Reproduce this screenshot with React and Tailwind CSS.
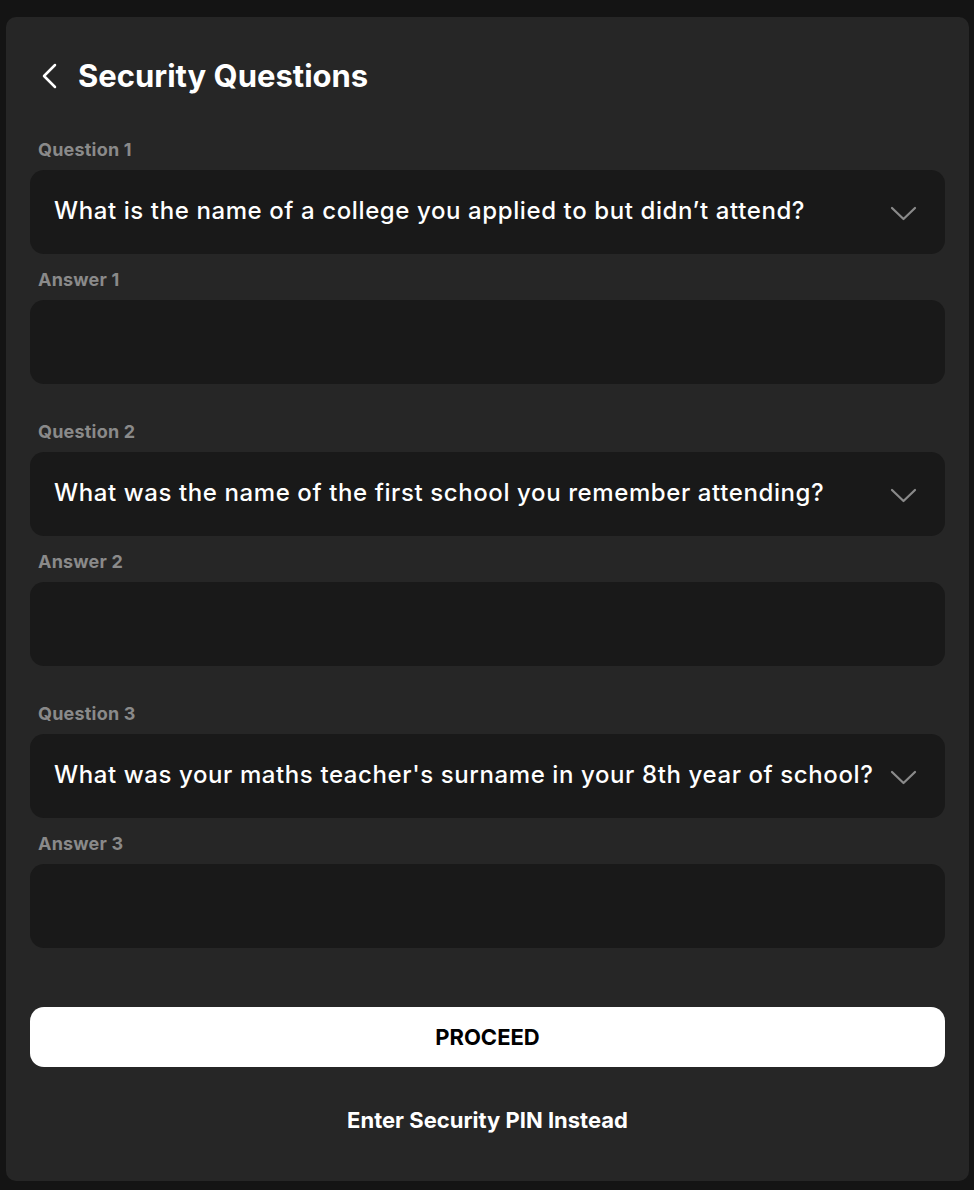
const questions = [
  { id: 1, text: 'What is the name of a college you applied to but didn\u2019t attend?' },
  { id: 2, text: 'What was the name of the first school you remember attending?' },
  { id: 3, text: "What was your maths teacher's surname in your 8th year of school?" },
];

function ChevronDownIcon() {
  return (
    <svg width="27" height="16" viewBox="0 0 27 16" fill="none" className="shrink-0 mt-[3px]">
      <polyline points="2,2 13.5,13 25,2" stroke="#8a8a8a" strokeWidth="2.25" strokeLinecap="round" strokeLinejoin="round" />
    </svg>
  );
}

function QuestionBlock({ q, first }) {
  return (
    <div className={first ? '' : 'mt-[38px]'}>
      <label className="block h-5 leading-5 text-[18px] font-bold text-[#8a8a8a] pl-2 mb-[10px] tracking-[0.2px]">
        Question {q.id}
      </label>
      <button
        type="button"
        className="w-full h-[84px] bg-[#191919] rounded-[14px] flex items-center justify-between pl-6 pr-[28px] text-left"
      >
        <span className="text-white text-[24px] font-medium tracking-[0.6px] -mt-[3px]">{q.text}</span>
        <ChevronDownIcon />
      </button>
      <label className="block h-5 leading-5 text-[18px] font-bold text-[#8a8a8a] pl-2 mt-4 mb-[10px] tracking-[0.2px]">
        Answer {q.id}
      </label>
      <input
        type="text"
        className="w-full h-[84px] bg-[#191919] rounded-[14px] px-6 text-white text-[22px] outline-none"
      />
    </div>
  );
}

export default function App() {
  return (
    <div
      className="min-h-screen bg-[#141414] pt-[17px] pb-[10px] pl-[6px] pr-[5px]"
      style={{ fontFamily: 'Inter, "Noto Sans", sans-serif' }}
    >
      <div className="bg-[#262626] rounded-[10px] px-6 pt-[41px] pb-[44px]">
        <div className="flex items-center h-9 mb-[46px]">
          <button type="button" className="ml-[10px] mr-[20px]">
            <svg width="18" height="28" viewBox="0 0 18 28" fill="none">
              <polyline points="15,3 4,14 15,25" stroke="white" strokeWidth="2.5" strokeLinecap="round" strokeLinejoin="round" />
            </svg>
          </button>
          <h1 className="text-white text-[31px] font-bold">Security Questions</h1>
        </div>

        {questions.map((q, i) => (
          <QuestionBlock key={q.id} q={q} first={i === 0} />
        ))}

        <button
          type="button"
          className="mt-[59px] w-full h-[60px] bg-white rounded-[14px] text-black text-[22px] font-bold"
        >
          PROCEED
        </button>
        <div className="mt-[37px] text-center">
          <button type="button" className="text-white text-[22px] font-bold">
            Enter Security PIN Instead
          </button>
        </div>
      </div>
    </div>
  );
}
